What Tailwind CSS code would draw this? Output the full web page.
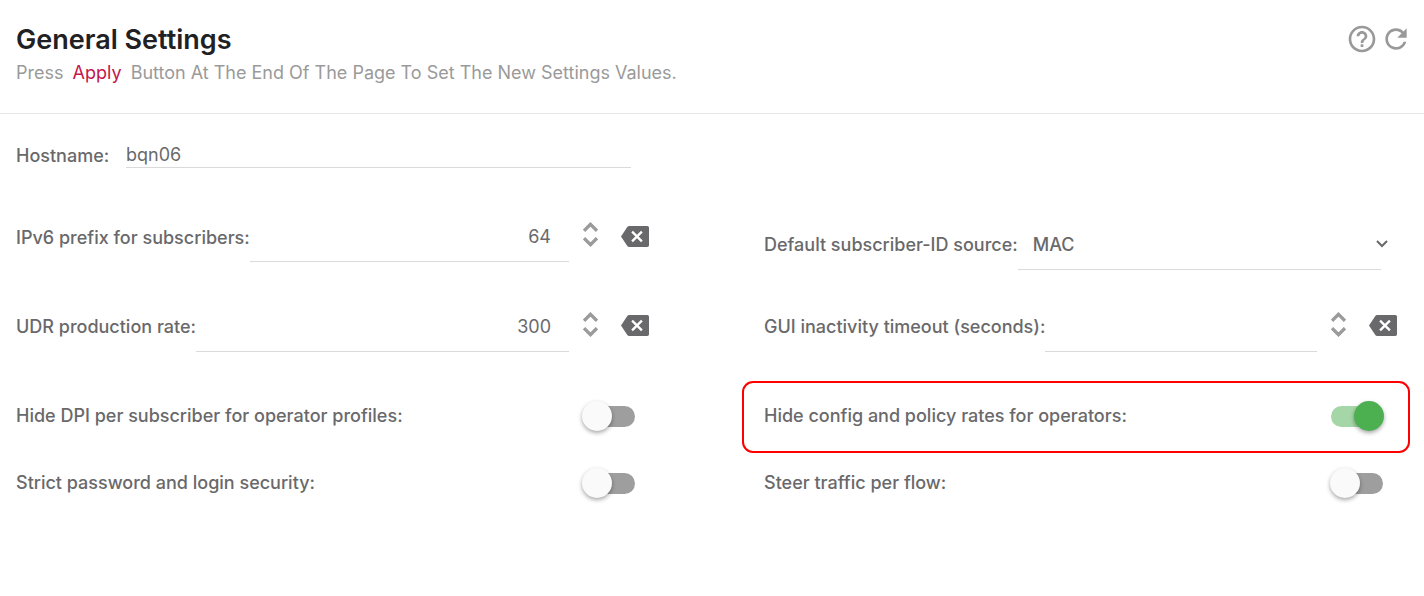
<!DOCTYPE html>
<html lang="en">
<head>
<meta charset="utf-8">
<meta name="viewport" content="width=device-width, initial-scale=1">
<title>General Settings</title>
<script src="https://cdn.jsdelivr.net/npm/@tailwindcss/browser@4"></script>
</head>
<body class="bg-white font-['Inter',sans-serif] text-lg text-[#69696b]">
<svg class="hidden" aria-hidden="true">
  <symbol id="up" viewBox="5.500 7.500 13 8.400"><path d="M12 8l-6 6 1.410 1.410L12 10.830l4.590 4.580L18 14z" fill="currentColor" stroke="currentColor" stroke-width=".9"/></symbol>
  <symbol id="down" viewBox="5.500 8.100 13 8.400"><path d="M16.590 8.590L12 13.170 7.410 8.590 6 10l6 6 6-6z" fill="currentColor" stroke="currentColor" stroke-width=".9"/></symbol>
  <symbol id="clear" viewBox="0 3 24 18"><path d="M22.500 3H7c-.69 0-1.230.35-1.590.88L0 12l5.410 8.110c.36.53.9.89 1.590.89h15.500c.8 0 1.500-.7 1.500-1.500V4.500c0-.8-.7-1.500-1.500-1.500z" fill="currentColor"/><path d="M9.500 7.800l8.400 8.400M17.900 7.800l-8.400 8.400" stroke="#fff" stroke-width="2" fill="none"/></symbol>
</svg>
<header class="flex items-start justify-between border-b border-[#e6e6e6] pt-[23px] pr-3 pb-[25px] pl-4">
  <div>
    <h1 class="text-[27px] leading-[34px] font-semibold text-[#212123]">General Settings</h1>
    <p class="leading-[31px] text-[#9a9a9a]">Press <span class="mx-1 text-[#c4164a]">Apply</span> Button At The End Of The Page To Set The New Settings Values.</p>
  </div>
  <div class="flex gap-[2px] text-[#999]">
    <button type="button" aria-label="Help"><svg class="size-8" viewBox="0 0 24 24" fill="currentColor"><path d="M11 18h2v-2h-2v2zm1-16C6.480 2 2 6.480 2 12s4.480 10 10 10 10-4.480 10-10S17.520 2 12 2zm0 18c-4.410 0-8-3.590-8-8s3.590-8 8-8 8 3.590 8 8-3.590 8-8 8zm0-14c-2.210 0-4 1.790-4 4h2c0-1.100.9-2 2-2s2 .9 2 2c0 2-3 1.750-3 5h2c0-2.250 3-2.500 3-5 0-2.210-1.790-4-4-4z"/></svg></button>
    <button type="button" aria-label="Refresh"><svg class="size-8" viewBox="0 0 24 24" fill="currentColor"><path d="M17.650 6.350C16.200 4.900 14.210 4 12 4c-4.420 0-7.990 3.580-7.990 8s3.570 8 7.990 8c3.730 0 6.840-2.550 7.730-6h-2.080c-.82 2.330-3.040 4-5.650 4-3.310 0-6-2.690-6-6s2.690-6 6-6c1.660 0 3.140.69 4.220 1.780L13 11h7V4l-2.350 2.350z"/></svg></button>
  </div>
</header>
<form class="grid grid-cols-2 gap-x-[115px] pr-[27px] pl-4">
  <div class="flex h-[82px] items-center pr-[18px]">
    <label for="host" class="w-[110px] shrink-0 pt-0.5 font-[550] whitespace-nowrap">Hostname:</label>
    <input id="host" type="text" value="bqn06" class="h-[26px] min-w-0 flex-1 border-b border-[#dadada] outline-none">
  </div>
  <div></div>

  <div class="flex h-[82px] items-center">
    <label for="ipv6" class="shrink-0 pt-0.5 font-[550] whitespace-nowrap">IPv6 prefix for subscribers:</label>
    <input id="ipv6" type="text" inputmode="numeric" value="64" class="h-[49px] min-w-0 flex-1 border-b border-[#dadada] pr-[18px] text-right outline-none">
    <div class="mb-1.5 ml-[14px] flex flex-col text-[#9a9a9a]">
      <button type="button" aria-label="Increase" class="flex h-[15px] items-center"><svg class="h-[10px] w-[15px]"><use href="#up"/></svg></button>
      <button type="button" aria-label="Decrease" class="flex h-[15px] items-center"><svg class="h-[10px] w-[15px]"><use href="#down"/></svg></button>
    </div>
    <button type="button" aria-label="Clear" class="mb-0.5 ml-[23px]"><svg class="h-[21px] w-7"><use href="#clear"/></svg></button>
  </div>
  <div class="flex h-[82px] items-center pt-4 pr-4">
    <label for="source" class="shrink-0 font-[550] whitespace-nowrap">Default subscriber-ID source:</label>
    <div class="relative min-w-0 flex-1">
      <select id="source" class="block h-[49px] w-full appearance-none border-b border-[#dadada] pl-[15px] font-medium outline-none"><option>MAC</option></select>
      <svg class="pointer-events-none absolute top-[19px] -right-2 h-2 w-3.5" viewBox="0 0 14 8" fill="none" stroke="currentColor" stroke-width="2"><path d="M2 1l5 5 5-5"/></svg>
    </div>
  </div>

  <div class="flex h-[98px] items-center">
    <label for="udr" class="shrink-0 font-[550] whitespace-nowrap">UDR production rate:</label>
    <input id="udr" type="text" inputmode="numeric" value="300" class="h-[49px] min-w-0 flex-1 border-b border-[#dadada] pr-[18px] text-right outline-none">
    <div class="mb-1.5 ml-[14px] flex flex-col text-[#9a9a9a]">
      <button type="button" aria-label="Increase" class="flex h-[15px] items-center"><svg class="h-[10px] w-[15px]"><use href="#up"/></svg></button>
      <button type="button" aria-label="Decrease" class="flex h-[15px] items-center"><svg class="h-[10px] w-[15px]"><use href="#down"/></svg></button>
    </div>
    <button type="button" aria-label="Clear" class="mb-1 ml-[23px]"><svg class="h-[21px] w-7"><use href="#clear"/></svg></button>
  </div>
  <div class="flex h-[98px] items-center">
    <label for="gui" class="shrink-0 font-[550] whitespace-nowrap">GUI inactivity timeout (seconds):</label>
    <input id="gui" type="text" inputmode="numeric" class="h-[49px] min-w-0 flex-1 border-b border-[#dadada] pr-[18px] text-right outline-none">
    <div class="mb-1.5 ml-[14px] flex flex-col text-[#9a9a9a]">
      <button type="button" aria-label="Increase" class="flex h-[15px] items-center"><svg class="h-[10px] w-[15px]"><use href="#up"/></svg></button>
      <button type="button" aria-label="Decrease" class="flex h-[15px] items-center"><svg class="h-[10px] w-[15px]"><use href="#down"/></svg></button>
    </div>
    <button type="button" aria-label="Clear" class="mb-1 ml-[23px]"><svg class="h-[21px] w-7"><use href="#clear"/></svg></button>
  </div>

  <div class="flex h-[82px] items-center justify-between pr-[14px] pb-0.5">
    <label for="dpi" class="font-[550] whitespace-nowrap">Hide DPI per subscriber for operator profiles:</label>
    <input id="dpi" type="checkbox" role="switch" class="relative h-[21px] w-[52px] appearance-none rounded-full bg-[#9e9e9e] before:absolute before:-top-[5px] before:-left-px before:size-[30px] before:rounded-full before:bg-[#fafafa] before:shadow-[0_2px_4px_rgba(0,0,0,0.35)] checked:bg-[#a5d6a7] checked:before:left-[23px] checked:before:bg-[#4caf50]">
  </div>
  <div class="-mr-[13px] -ml-[22px] flex h-[72px] items-center justify-between self-center rounded-[11px] border-2 border-[#f00] pr-[25px] pb-0.5 pl-5">
    <label for="rates" class="font-[550] whitespace-nowrap">Hide config and policy rates for operators:</label>
    <input id="rates" type="checkbox" role="switch" checked class="relative h-[21px] w-[52px] appearance-none rounded-full bg-[#9e9e9e] before:absolute before:-top-[5px] before:-left-px before:size-[30px] before:rounded-full before:bg-[#fafafa] before:shadow-[0_2px_4px_rgba(0,0,0,0.35)] checked:bg-[#a5d6a7] checked:before:left-[23px] checked:before:bg-[#4caf50]">
  </div>

  <div class="flex h-[50px] items-center justify-between pr-[14px]">
    <label for="strict" class="font-[550] whitespace-nowrap">Strict password and login security:</label>
    <input id="strict" type="checkbox" role="switch" class="relative h-[21px] w-[52px] appearance-none rounded-full bg-[#9e9e9e] before:absolute before:-top-[5px] before:-left-px before:size-[30px] before:rounded-full before:bg-[#fafafa] before:shadow-[0_2px_4px_rgba(0,0,0,0.35)] checked:bg-[#a5d6a7] checked:before:left-[23px] checked:before:bg-[#4caf50]">
  </div>
  <div class="flex h-[50px] items-center justify-between pr-[14px]">
    <label for="steer" class="font-[550] whitespace-nowrap">Steer traffic per flow:</label>
    <input id="steer" type="checkbox" role="switch" class="relative h-[21px] w-[52px] appearance-none rounded-full bg-[#9e9e9e] before:absolute before:-top-[5px] before:-left-px before:size-[30px] before:rounded-full before:bg-[#fafafa] before:shadow-[0_2px_4px_rgba(0,0,0,0.35)] checked:bg-[#a5d6a7] checked:before:left-[23px] checked:before:bg-[#4caf50]">
  </div>
</form>
</body>
</html>
